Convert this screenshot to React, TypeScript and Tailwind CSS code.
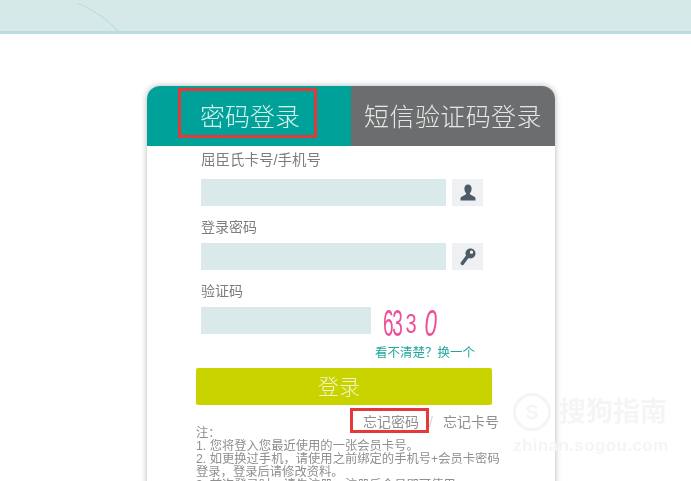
const FONT = "font-['Liberation_Sans','Noto_Sans_CJK_SC',sans-serif]";

function UserIcon() {
  return (
    <svg width="16" height="17" viewBox="0 0 16 17" fill="#4d5b66">
      <path d="M8 0.5C5.6 0.5 4.4 2.3 4.4 4.6C4.4 6.6 5.1 8.2 6 9.2C6.3 9.6 6.2 10.3 5.7 10.6L1.6 12.7C0.9 13 0.5 13.6 0.5 14.3V16.5H15.5V14.3C15.5 13.6 15.1 13 14.4 12.7L10.3 10.6C9.8 10.3 9.7 9.6 10 9.2C10.9 8.2 11.6 6.6 11.6 4.6C11.6 2.3 10.4 0.5 8 0.5Z" />
    </svg>
  );
}

function KeyIcon() {
  return (
    <svg width="16" height="18" viewBox="0 0 16 18" fill="#4d5b66">
      <path
        fillRule="evenodd"
        d="M10.5 0.5C7.7 0.5 5.5 2.7 5.5 5.5C5.5 6.3 5.7 7 6 7.6L0.8 14.6C0.4 15.2 0.5 16 1 16.4L1.8 17C2.4 17.4 3.1 17.3 3.5 16.7L8.6 9.9C9.2 10.2 9.8 10.4 10.5 10.4C13.3 10.4 15.5 8.2 15.5 5.5C15.5 2.7 13.3 0.5 10.5 0.5ZM11.5 2.6C12.4 2.6 13.1 3.3 13.1 4.2C13.1 5.1 12.4 5.8 11.5 5.8C10.6 5.8 9.9 5.1 9.9 4.2C9.9 3.3 10.6 2.6 11.5 2.6Z"
      />
    </svg>
  );
}

export default function App() {
  return (
    <div className={`relative h-[481px] w-[691px] overflow-hidden bg-white blur-[0.4px] ${FONT}`}>
      {/* Top band */}
      <div className="relative h-[34px] border-b-[3px] border-[#bcdcdb] bg-[#d5e9e8]">
        <svg className="absolute left-[70px] top-0" width="60" height="34" viewBox="0 0 60 34" fill="none">
          <path d="M7 3 C24 10 38 20 48 31" stroke="#bfdcdb" strokeWidth="1.2" />
        </svg>
      </div>

      {/* Login card */}
      <div className="ml-[147px] mt-[52px] h-[420px] w-[408px] rounded-t-[13px] bg-white shadow-[0_0_6px_rgba(0,0,0,0.3)]">
        <div className="flex h-[60px]">
          <div className="relative flex w-[204px] items-center rounded-tl-[13px] bg-[#00a199] pl-[53px] pt-[3px] text-[25px] font-light text-[#d8f2ee]">
            密码登录
            <div className="absolute left-[31px] top-[2px] h-[50px] w-[139px] border-[3px] border-[#e5383b]" />
          </div>
          <div className="flex flex-1 items-center justify-center rounded-tr-[13px] bg-[#6c6d6e] pt-[3px] text-[25px] font-light tracking-[0.4px] text-[#e6e6e6]">
            短信验证码登录
          </div>
        </div>

        <div className="pl-[49px] pr-[63px]">
          <div className="pl-[5px] pt-[5px]">
            <div className="whitespace-nowrap text-[14.5px] leading-[18px] text-[#7d7d7d]">屈臣氏卡号/手机号</div>
            <div className="mt-[10px] flex gap-[6px]">
              <div className="h-[27px] w-[245px] bg-[#dae9e9]" />
              <div className="flex h-[27px] w-[31px] items-center justify-center bg-[#eef0f3]">
                <UserIcon />
              </div>
            </div>

            <div className="mt-[12px] text-[14px] leading-[18px] text-[#7d7d7d]">登录密码</div>
            <div className="mt-[7px] flex gap-[6px]">
              <div className="h-[27px] w-[245px] bg-[#dae9e9]" />
              <div className="flex h-[27px] w-[31px] items-center justify-center bg-[#eef0f3]">
                <KeyIcon />
              </div>
            </div>

            <div className="mt-[12px] text-[14px] leading-[18px] text-[#7d7d7d]">验证码</div>
            <div className="mt-[7px] flex">
              <div className="h-[27px] w-[170px] bg-[#dae9e9]" />
              <div className="ml-[12px] flex h-[34px] w-[60px] items-center text-[#ef4f97]">
                <span className="inline-block origin-left scale-x-[0.68] scale-y-[1.35] text-[28px] tracking-[-2px]">63</span>
                <span className="ml-[-6px] inline-block scale-x-[0.8] scale-y-[1.1] text-[25px]">3</span>
                <span className="ml-[5px] inline-block scale-x-[0.8] scale-y-[1.3] text-[28px] italic">0</span>
              </div>
            </div>
            <div className="ml-[174px] mt-[5px] whitespace-nowrap text-[12.5px] leading-[14px] text-[#1fa79c]">看不清楚？换一个</div>
          </div>

          <div className="mt-[8px] flex h-[37px] w-[296px] items-center justify-center rounded-[2px] bg-[#c9d300] pr-[10px] text-[21px] font-light text-[#f0f5c8]">
            登录
          </div>

          <div className="relative mt-[8px] flex h-[18px] w-[303px] items-center justify-end text-[14px] text-[#8f8f8f]">
            <span>忘记密码</span>
            <span className="mx-[10px] text-[#d5d5d5]">/</span>
            <span>忘记卡号</span>
            <div className="absolute left-[154px] top-[-5px] h-[25px] w-[79px] border-[3px] border-[#e5383b]" />
          </div>

          <div className="mt-[-4px] w-[310px] text-[12.3px] leading-[13px] text-[#8f8f8f]">
            <div>注：</div>
            <div>1. 您将登入您最近使用的一张会员卡号。</div>
            <div>2. 如更换过手机，请使用之前绑定的手机号+会员卡密码</div>
            <div>登录，登录后请修改资料。</div>
            <div>3. 首次登录时，请先注册，注册后会员即可使用。</div>
          </div>
        </div>
      </div>

      {/* Watermark */}
      <div className="absolute left-[513px] top-[393px] w-[175px] text-[#f5f5f5]">
        <div className="flex items-center gap-[8px]">
          <div className="flex h-[38px] w-[38px] items-center justify-center rounded-full border-[3px] border-[#f5f5f5] text-[20px] font-bold">S</div>
          <span className="whitespace-nowrap text-[27px] font-bold leading-[38px]">搜狗指南</span>
        </div>
        <div className="mt-[6px] whitespace-nowrap text-[17px] font-bold leading-[18px] tracking-[0.4px]">zhinan.sogou.com</div>
      </div>
    </div>
  );
}
